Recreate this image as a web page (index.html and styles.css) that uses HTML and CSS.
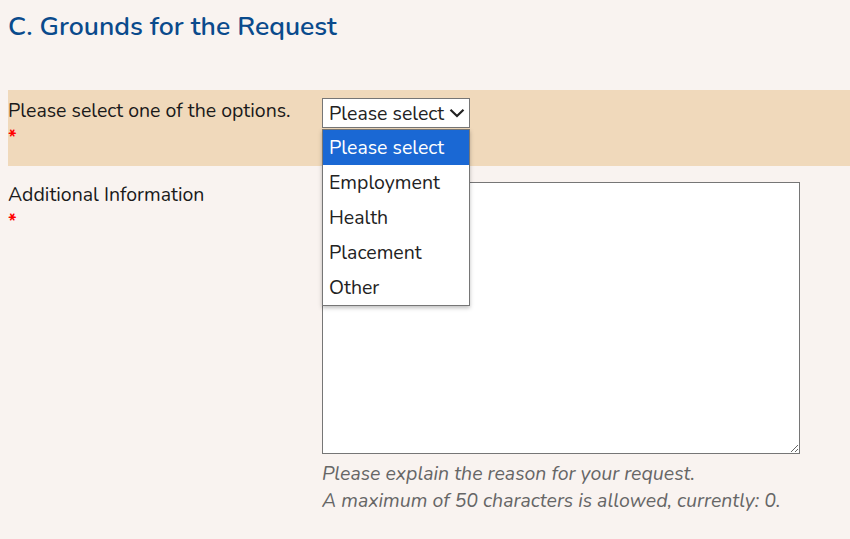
FILE: index.html
```html
<!DOCTYPE html>
<html lang="en">
<head>
<meta charset="utf-8">
<title>Grounds for the Request</title>
<link rel="stylesheet" href="styles.css">
</head>
<body>
<section class="section">
  <h2 class="title">C. Grounds for the Request</h2>
  <div class="row row-band">
    <div class="label">
      <div>Please select one of the options.</div>
      <div class="req">*</div>
    </div>
    <div class="field">
      <div class="select-wrap">
        <div class="select">
          <span>Please select</span>
          <svg class="chev" width="16" height="10" viewBox="0 0 16 10"><path d="M1.5 1.8 L8 8 L14.5 1.8" fill="none" stroke="#222" stroke-width="2.2"/></svg>
        </div>
        <ul class="menu">
          <li class="opt active">Please select</li>
          <li class="opt">Employment</li>
          <li class="opt">Health</li>
          <li class="opt">Placement</li>
          <li class="opt">Other</li>
        </ul>
      </div>
    </div>
  </div>
  <div class="row row-plain">
    <div class="label">
      <div>Additional Information</div>
      <div class="req">*</div>
    </div>
    <div class="field">
      <textarea class="textarea"></textarea>
      <div class="help">
        <div>Please explain the reason for your request.</div>
        <div>A maximum of 50 characters is allowed, currently: 0.</div>
      </div>
    </div>
  </div>
</section>
</body>
</html>
```
FILE: styles.css
```css
html, body {
  margin: 0;
  padding: 0;
  background: #f9f3f0;
}
body {
  font-family: "Nunito", "Open Sans", "Noto Sans", sans-serif;
  color: #1a1a1a;
  font-size: 19.5px;
}
.section {
  padding-left: 8px;
}
.title {
  margin: 0;
  padding-top: 9px;
  height: 90px;
  box-sizing: border-box;
  font-size: 26.6px;
  font-weight: 600;
  color: #0a4a8c;
  line-height: 34px;
}
.row {
  display: flex;
}
.row-band {
  background: #f0d9bb;
  height: 76px;
  box-sizing: border-box;
  padding-top: 8px;
}
.row-plain {
  padding-top: 16px;
}
.label {
  width: 314px;
  flex: none;
  line-height: 26px;
}
.req {
  color: #ff0000;
  font-size: 19px;
  line-height: 24px;
  font-weight: 700;
  margin-top: 2px;
}
.field {
  flex: none;
}
.select-wrap {
  position: relative;
  width: 148px;
}
.select {
  box-sizing: border-box;
  width: 148px;
  height: 30px;
  background: #fff;
  border: 1px solid #767676;
  display: flex;
  align-items: center;
  justify-content: space-between;
  padding: 0 4px 0 6px;
  font-size: 19.5px;
  color: #222;
}
.chev {
  flex: none;
}
.menu {
  position: absolute;
  top: 31px;
  left: 0;
  width: 148px;
  box-sizing: border-box;
  margin: 0;
  padding: 0;
  list-style: none;
  background: #fff;
  border: 1px solid #767676;
  box-shadow: 0 2px 4px rgba(0,0,0,0.25);
  z-index: 2;
}
.opt {
  height: 35px;
  line-height: 35px;
  padding-left: 6px;
  font-size: 19.5px;
  color: #222;
}
.opt.active {
  background: #1a68d4;
  color: #fff;
}
.textarea {
  display: block;
  box-sizing: border-box;
  width: 478px;
  height: 272px;
  margin: 0;
  border: 1px solid #767676;
  background: #fff;
  resize: vertical;
}
.help {
  margin-top: 6px;
  font-style: italic;
  color: #666;
  line-height: 27px;
  font-size: 19.5px;
}
```
